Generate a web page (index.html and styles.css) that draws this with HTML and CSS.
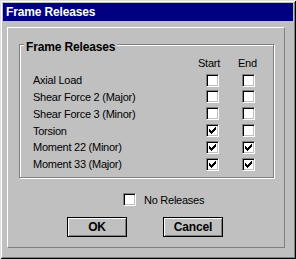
FILE: index.html
```html
<!DOCTYPE html>
<html lang="en">
<head>
  <meta charset="UTF-8">
  <title>Frame Releases</title>
  <link rel="stylesheet" href="styles.css">
</head>
<body>
  <div class="window">
    <div class="titlebar">Frame Releases</div>
    <div class="panel">
      <div class="group">
        <span class="legend">Frame Releases</span>
        <div class="grid">
          <span></span><span class="head">Start</span><span class="head end">End</span>

          <span class="label">Axial Load</span>
          <span class="cb"></span><span class="cb"></span>

          <span class="label">Shear Force 2 (Major)</span>
          <span class="cb"></span><span class="cb"></span>

          <span class="label">Shear Force 3 (Minor)</span>
          <span class="cb"></span><span class="cb"></span>

          <span class="label">Torsion</span>
          <span class="cb"><svg class="tick" width="7" height="7" viewBox="0 0 7 7"><path d="M0 2h1v3H0zM1 3h1v3H1zM2 4h1v3H2zM3 3h1v3H3zM4 2h1v3H4zM5 1h1v3H5zM6 0h1v3H6z"/></svg></span>
          <span class="cb"></span>

          <span class="label">Moment 22 (Minor)</span>
          <span class="cb"><svg class="tick" width="7" height="7" viewBox="0 0 7 7"><path d="M0 2h1v3H0zM1 3h1v3H1zM2 4h1v3H2zM3 3h1v3H3zM4 2h1v3H4zM5 1h1v3H5zM6 0h1v3H6z"/></svg></span>
          <span class="cb"><svg class="tick" width="7" height="7" viewBox="0 0 7 7"><path d="M0 2h1v3H0zM1 3h1v3H1zM2 4h1v3H2zM3 3h1v3H3zM4 2h1v3H4zM5 1h1v3H5zM6 0h1v3H6z"/></svg></span>

          <span class="label">Moment 33 (Major)</span>
          <span class="cb"><svg class="tick" width="7" height="7" viewBox="0 0 7 7"><path d="M0 2h1v3H0zM1 3h1v3H1zM2 4h1v3H2zM3 3h1v3H3zM4 2h1v3H4zM5 1h1v3H5zM6 0h1v3H6z"/></svg></span>
          <span class="cb"><svg class="tick" width="7" height="7" viewBox="0 0 7 7"><path d="M0 2h1v3H0zM1 3h1v3H1zM2 4h1v3H2zM3 3h1v3H3zM4 2h1v3H4zM5 1h1v3H5zM6 0h1v3H6z"/></svg></span>
        </div>
      </div>
      <div class="norel">
        <span class="cb"></span>
        <span class="label">No Releases</span>
      </div>
      <div class="buttons">
        <button class="btn">OK</button>
        <button class="btn">Cancel</button>
      </div>
    </div>
  </div>
</body>
</html>
```

FILE: styles.css
```css
body {
  margin: 0;
  font-family: "Liberation Sans", Arial, sans-serif;
  background: #c0c0c0;
}
.window {
  width: 296px;
  height: 259px;
  box-sizing: border-box;
  padding: 3px;
  background: #c0c0c0;
  box-shadow: inset 1px 1px #dfdfdf, inset -1px -1px #000,
              inset 2px 2px #fff, inset -2px -2px #808080;
}
.titlebar {
  height: 18px;
  line-height: 18px;
  padding-left: 3px;
  background: #000080;
  color: #fff;
  font-size: 12px;
  font-weight: bold;
  letter-spacing: -0.15px;
}
.panel {
  width: 278px;
  height: 221px;
  box-sizing: border-box;
  margin: 6px 0 0 4px;
  padding: 16px 0 0 11px;
  border-top: 1px solid #fff;
  border-left: 1px solid #fff;
  border-right: 1px solid #808080;
  border-bottom: 1px solid #808080;
}
.group {
  position: relative;
  width: 255px;
  height: 134px;
  box-sizing: border-box;
  padding: 10px 0 0 13px;
  border: 1px solid #808080;
  box-shadow: inset 1px 1px #fff, 1px 1px #fff;
}
.legend {
  position: absolute;
  top: -5px;
  left: 4px;
  padding: 0 2px;
  background: #c0c0c0;
  font-size: 12px;
  line-height: 14px;
  font-weight: bold;
  letter-spacing: -0.15px;
}
.grid {
  display: grid;
  grid-template-columns: 165px 36px 36px;
  grid-auto-rows: 16.8px;
  align-items: center;
}
.label, .head {
  font-size: 11px;
  letter-spacing: -0.25px;
  line-height: 14px;
}
.head.end {
  margin-left: 4px;
}
.grid .cb {
  margin-left: 8px;
}
.cb {
  position: relative;
  width: 13px;
  height: 13px;
  box-sizing: border-box;
  background: #fff;
  border-top: 1px solid #808080;
  border-left: 1px solid #808080;
  border-right: 1px solid #fff;
  border-bottom: 1px solid #fff;
  box-shadow: inset 1px 1px #000, inset -1px -1px #c0c0c0;
}
.tick {
  display: block;
  margin: 2px 0 0 2px;
}
.norel {
  display: flex;
  align-items: center;
  gap: 8px;
  height: 13px;
  margin: 15px 0 0 104px;
}
.buttons {
  display: flex;
  gap: 36px;
  margin: 11px 0 0 48px;
}
.btn {
  width: 60px;
  height: 20px;
  padding: 0;
  background: #c0c0c0;
  border: 1px solid #000;
  box-shadow: inset 1px 1px #fff, inset -1px -1px #808080;
  font-family: "Liberation Sans", Arial, sans-serif;
  font-size: 12px;
  font-weight: bold;
  letter-spacing: -0.15px;
  color: #000;
}
```
